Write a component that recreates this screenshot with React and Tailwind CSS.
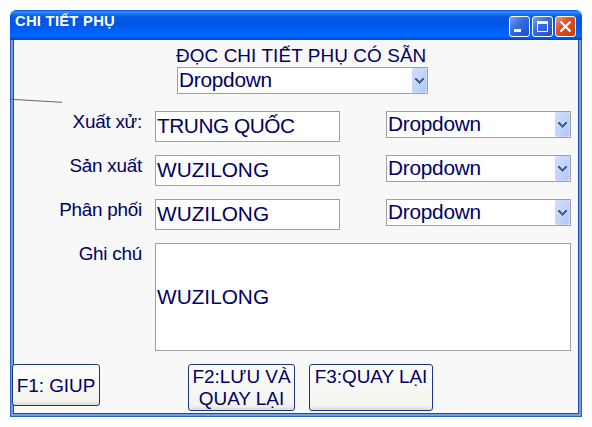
const FIELD = 'border border-[#a0a0a0] bg-white text-[20.8px] whitespace-nowrap';

function Dropdown({ className = '' }) {
  return (
    <div className={`flex h-[27px] justify-between pl-px leading-[23px] ${FIELD} ${className}`}>
      <span className="tracking-[-0.25px]">Dropdown</span>
      <span className="flex w-[15px] items-center justify-center rounded-[2px] border border-[#c9d8fc] bg-linear-to-br from-[#d2e0fe] to-[#b0c8f8]">
        <svg width="9" height="6" viewBox="0 0 9 6" shapeRendering="crispEdges" className="shrink-0">
          <path d="M0 0h2v1h1v1h1v1h1V2h1V1h1V0h2v2H8v1H7v1H6v1H5v1H4V5H3V4H2V3H1V2H0z" fill="#4d6185" />
        </svg>
      </span>
    </div>
  );
}

function Row({ label, value, valueClass = '' }) {
  return (
    <div className="flex h-11 items-start">
      <div className="w-32 text-right text-[18.9px] leading-[22px] tracking-[-0.25px] whitespace-nowrap">{label}</div>
      <div className={`ml-[13px] h-[31px] w-[185px] pl-px leading-[27px] ${FIELD} ${valueClass}`}>{value}</div>
      <Dropdown className="ml-[46px] w-[185px]" />
    </div>
  );
}

function Button({ className = '', children }) {
  return (
    <button
      className={`rounded-[3px] border border-[#1c3484] bg-linear-to-b from-[#fdfdfc] via-[#f3f3ef] via-90% to-[#dfddd3] text-center text-[18.9px] whitespace-nowrap ${className}`}
    >
      {children}
    </button>
  );
}

function TitleButton({ close = false, children }) {
  return (
    <span
      className={`flex size-[21px] items-center justify-center rounded-[3px] border border-white ${
        close
          ? 'bg-linear-to-br from-[#f09a80] via-[#e2532b] via-35% to-[#c43a10]'
          : 'bg-linear-to-br from-[#7d9ff5] via-[#396ee8] via-40% to-[#1c49cf]'
      }`}
    >
      <svg width="19" height="19" viewBox="0 0 19 19" fill="none" stroke="#fff" className="shrink-0">
        {children}
      </svg>
    </span>
  );
}

export default function App() {
  return (
    <div
      className="h-[427px] w-[592px] overflow-hidden bg-white pt-[10px] pl-[10px] text-[#000066]"
      style={{ fontFamily: '"Liberation Sans", Arial, sans-serif' }}
    >
      <div className="relative flex h-[407px] w-[572px] flex-col">
        <header className="flex h-[30px] shrink-0 justify-between rounded-t-[6px] bg-[linear-gradient(to_bottom,#0950d0_0px,#3192ff_2px,#1673f5_4px,#0558e4_7px,#0055e5_13px,#0062fa_22px,#0067ff_26px,#0050dd_29px,#0045c8_30px)] pr-[6px] pl-[5px]">
          <h1 className="text-[14.8px] leading-[23px] font-bold tracking-[0.25px] whitespace-nowrap text-white">CHI TIẾT PHỤ</h1>
          <div className="flex gap-[2px] pt-[6px]">
            <TitleButton>
              <path d="M4 13.5h7" strokeWidth="3" />
            </TitleButton>
            <TitleButton>
              <path d="M4.5 5v9.5h10V5" />
              <path d="M4 5.5h11" strokeWidth="3" />
            </TitleButton>
            <TitleButton close>
              <path d="M4.5 4.5l10 10M14.5 4.5l-10 10" strokeWidth="2.2" />
            </TitleButton>
          </div>
        </header>

        <div className="flex grow border border-t-0 border-[#2f5fbc] bg-[#6f9fe2]">
          <main className="mx-[2px] mb-[2px] flex grow flex-col border border-t-0 border-[#24479a] bg-[#f8f8f8]">
            <div className="ml-[163px] w-[251px] pt-[3px]">
              <div className="-ml-px h-6 text-[18.9px] leading-[25px] tracking-[0.1px] whitespace-nowrap">ĐỌC CHI TIẾT PHỤ CÓ SẴN</div>
              <Dropdown />
            </div>

            <div className="mt-[17px]">
              <Row label="Xuất xử:" value="TRUNG QUỐC" valueClass="tracking-[-0.45px]" />
              <Row label="Sản xuất" value="WUZILONG" />
              <Row label="Phân phối" value="WUZILONG" />
              <div className="flex">
                <div className="w-32 text-right text-[18.9px] leading-[22px] tracking-[-0.25px]">Ghi chú</div>
                <div className={`ml-[13px] flex h-[108px] w-[416px] items-center pl-px ${FIELD}`}>WUZILONG</div>
              </div>
            </div>

            <footer className="mt-[13px] flex items-start">
              <Button className="-ml-[2px] h-[42px] w-[88px] pt-[2px]">F1: GIUP</Button>
              <Button className="ml-[88px] h-[47px] w-[107px] pt-[1px] leading-[22px]">
                F2:LƯU VÀ
                <br />
                QUAY LẠI
              </Button>
              <Button className="ml-[14px] flex h-[47px] w-[124px] justify-center pt-[1px] leading-[22px]">F3:QUAY LẠI</Button>
            </footer>
          </main>
        </div>

        <svg className="absolute top-[88px] left-[1px]" width="52" height="5" fill="none">
          <path d="M0 1.3L51 4.3" stroke="#666" />
        </svg>
      </div>
    </div>
  );
}
